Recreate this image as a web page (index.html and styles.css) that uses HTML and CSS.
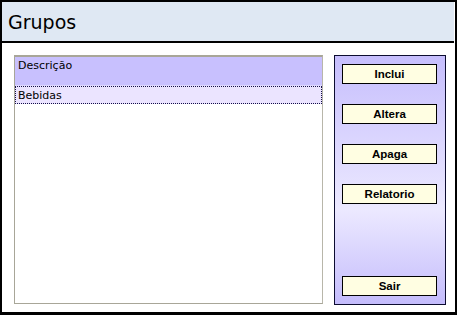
FILE: index.html
```html
<!DOCTYPE html>
<html lang="pt">
<head>
<meta charset="UTF-8">
<title>Grupos</title>
<link rel="stylesheet" href="styles.css">
</head>
<body>
    <div class="window">
        <div class="title-bar">Grupos</div>

        <div class="content">
            <div class="grid">
                <div class="grid-header">Descrição</div>
                <div class="grid-row selected">Bebidas</div>
            </div>

            <div class="side-panel">
                <button class="btn">Inclui</button>
                <button class="btn">Altera</button>
                <button class="btn">Apaga</button>
                <button class="btn">Relatorio</button>
                <button class="btn btn-exit">Sair</button>
            </div>
        </div>
    </div>
</body>
</html>
```
FILE: styles.css
```css
body {
    margin: 0;
    padding: 0;
    background-color: #fff;
}

.window {
    box-sizing: border-box;
    width: 457px;
    height: 315px;
    border: 2px solid #000;
    border-bottom-width: 3px;
    background-color: #fff;
    display: flex;
    flex-direction: column;
}

.title-bar {
    height: 39px;
    margin-right: 1px;
    padding-left: 6px;
    background-color: #dfe8f3;
    border-bottom: 2px solid #000;
    font-family: "DejaVu Sans", sans-serif;
    font-size: 19px;
    line-height: 40px;
    color: #000;
}

.content {
    display: flex;
    padding: 12px 0 0 12px;
    gap: 11px;
}

/* list of groups */
.grid {
    box-sizing: border-box;
    width: 309px;
    height: 249px;
    border-top: 2px solid #a8a698;
    border-left: 1px solid #a8a698;
    border-right: 1px solid #b8b6aa;
    border-bottom: 1px solid #a8a698;
    font-family: "DejaVu Sans", sans-serif;
    font-size: 11px;
    color: #000;
}

.grid-header {
    height: 29px;
    padding: 2px 0 0 3px;
    box-sizing: border-box;
    background-color: #c8c0fe;
    border-bottom: 1px solid #ddd8ff;
}

.grid-row {
    height: 18px;
    box-sizing: border-box;
    padding-left: 2px;
    line-height: 17px;
    background-color: #ebe4ff;
}

.selected {
    border: 1px dotted #14104a;
}

/* buttons on the right */
.side-panel {
    box-sizing: border-box;
    width: 112px;
    height: 250px;
    border: 1px solid #0c0c30;
    background: linear-gradient(#c6befd, #ece9ff 62%, #c4bcfc);
    display: flex;
    flex-direction: column;
    align-items: flex-start;
    padding: 8px 0 8px 7px;
    gap: 20px;
}

.btn {
    width: 95px;
    height: 20px;
    padding: 0;
    border: 1px solid #000;
    background-color: #fffee2;
    font-family: "Liberation Sans", Arial, sans-serif;
    font-size: 11.5px;
    font-weight: bold;
    color: #000;
    cursor: pointer;
}

.btn-exit {
    margin-top: auto;
}
```
